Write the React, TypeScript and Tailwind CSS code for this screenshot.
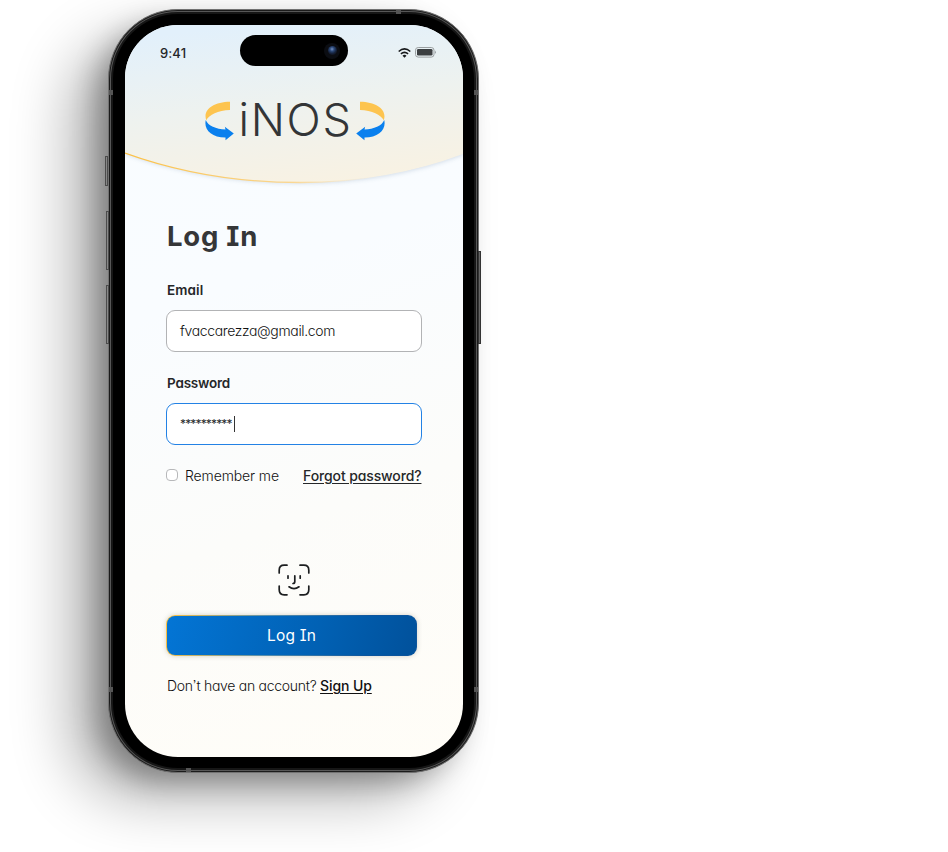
const inter = "font-['Inter','Liberation_Sans',sans-serif] [font-feature-settings:'cv11','cv08','ss03']";

function StatusBar() {
  return (
    <div className="flex h-[58px] items-start pt-[10px]">
      <span className="w-[115px] pt-[8px] pl-[35px] text-[13px] leading-5 font-medium tracking-[0.1px] text-[#242628]">9:41</span>
      <div className="flex h-[31px] w-[108px] items-center justify-end rounded-full bg-black pr-[8px]">
        <span className="flex h-4 w-4 items-center justify-center rounded-full bg-[#0b0d12]">
          <span className="h-[9px] w-[9px] rounded-full bg-[radial-gradient(circle_at_45%_35%,#7793c4_0,#2b4878_28%,#16233e_55%,#111521_75%)]" />
        </span>
      </div>
      <div className="flex w-[115px] items-center gap-[4px] pt-[12px] pl-[50px]">
        <svg width="13" height="10" viewBox="0 0 13 10" fill="none" stroke="#17191b" strokeWidth="1.6">
          <path d="M.7 3.5Q6.5-1.6 12.3 3.5M2.9 5.8Q6.5 2.8 10.1 5.8" />
          <path d="M4.5 7.7Q6.5 6 8.5 7.7L6.5 9.8Z" fill="#17191b" stroke="none" />
        </svg>
        <svg width="22" height="11" viewBox="0 0 22 11">
          <rect x=".5" y=".5" width="18.5" height="9.6" rx="2.7" fill="none" stroke="#9a9fa1" />
          <rect x="2" y="2" width="15.5" height="6.6" rx="1.3" fill="#3c3f41" />
          <path d="M20 3.5q1.8 1.8 0 3.5Z" fill="#858b8e" />
        </svg>
      </div>
    </div>
  );
}

function Swoosh({ flip = false }: { flip?: boolean }) {
  return (
    <svg width="29" height="40" viewBox="0 0 29 40" className={flip ? "-scale-x-100" : ""}>
      <path d="M25 .8V9C13 9.5 4 14 1.3 19.3C-2.5 9 8 1 25 .8Z" fill="#fdc44f" />
      <path d="M.8 19C3 25 11 28 20.500 28.500L19.800 25.800L28.8 32.6L20.5 39.2V36.5C6 36.5-1.5 28 .8 19Z" fill="#0a80ee" />
    </svg>
  );
}

function Logo() {
  return (
    <div className="flex justify-center pl-px">
      <Swoosh />
      <span className="h-[40px] w-[122px] pl-[5px] font-['Inter',sans-serif] text-[45px] leading-[38px] font-light tracking-[1.7px] whitespace-nowrap text-[#333537]">iNOS</span>
      <Swoosh flip />
    </div>
  );
}

function Header() {
  return (
    <header className="relative h-[164px]">
      <svg className="absolute inset-0" width="338" height="170" viewBox="0 0 338 170">
        <defs>
          <linearGradient id="sky" x1=".35" y1="0" x2=".6" y2="1">
            <stop stopColor="#e2f0fb" />
            <stop offset=".5" stopColor="#eef2ef" />
            <stop offset="1" stopColor="#f8f2e3" />
          </linearGradient>
          <linearGradient id="rim">
            <stop stopColor="#fcc144" />
            <stop offset=".5" stopColor="#fad793" />
            <stop offset=".75" stopColor="#faebce" stopOpacity="0" />
          </linearGradient>
        </defs>
        <path d="M0 0H338V129Q262 157.500 175 157.500Q82 157.500 0 128Z" fill="url(#sky)" className="drop-shadow-[0_1px_2px_rgba(20,60,110,0.16)]" />
        <path d="M0 128Q82 157.500 175 157.500Q262 157.500 338 129" fill="none" stroke="url(#rim)" strokeWidth="1.3" />
      </svg>
      <div className="relative">
        <StatusBar />
        <div className="pt-[18px]"><Logo /></div>
      </div>
    </header>
  );
}

function FaceId() {
  return (
    <svg width="32" height="32" viewBox="0 0 32 32" fill="none" stroke="#1c1e20" strokeWidth="1.7" strokeLinecap="round">
      <path d="M1.2 9V6.2Q1.2 1.2 6.2 1.2H9M22 1.2H25.8Q30.8 1.2 30.8 6.2V9M30.8 22V25.8Q30.8 30.8 25.8 30.8H22M9 30.8H6.2Q1.2 30.8 1.2 25.8V22" />
      <path d="M10 11.800V14.200M22.2 11.800V14.200M16.800 11.800V17.500Q16.8 19.5 15 19.5M11 22.800Q16 26.600 21 22.800" />
    </svg>
  );
}

export default function App() {
  return (
    <main className={`h-[852px] w-[948px] overflow-hidden bg-white pt-[9px] pl-[108px] ${inter}`}>
      <div className="relative h-[764px] w-[371px] rounded-[70px] border border-[#727272] bg-black p-[15px_15px_14px_16px] shadow-[inset_0_0_0_1px_#1b1b1b,inset_0_0_0_2px_#575757,inset_0_0_0_4px_#161616,-40px_28px_62px_-6px_rgba(0,0,0,0.33),-14px_12px_28px_-4px_rgba(0,0,0,0.3)]">
        <i className="absolute top-[146px] -left-[4px] h-[30px] w-[3px] border border-[#4b4b4b] bg-[#888]" />
        <i className="absolute top-[201px] -left-[3px] h-[59px] w-[3px] border border-[#4b4b4b] bg-[#888]" />
        <i className="absolute top-[275px] -left-[3px] h-[59px] w-[3px] border border-[#4b4b4b] bg-[#888]" />
        <i className="absolute top-[241px] -right-[3px] h-[93px] w-[3px] border border-[#333] bg-[#666]" />
        <i className="absolute top-[80px] left-0 h-[5px] w-[4px] bg-[#555]" />
        <i className="absolute top-[80px] right-0 h-[5px] w-[4px] bg-[#555]" />
        <i className="absolute top-[677px] left-0 h-[5px] w-[4px] bg-[#555]" />
        <i className="absolute top-[677px] right-0 h-[5px] w-[4px] bg-[#555]" />
        <i className="absolute top-0 left-[287px] h-[4px] w-[5px] bg-[#555]" />
        <i className="absolute bottom-0 left-[77px] h-[4px] w-[5px] bg-[#555]" />
        <div className="h-[732px] w-[338px] overflow-hidden rounded-[53px] bg-[linear-gradient(160deg,#f8fcff_0%,#f9fcff_35%,#fcfcfa_65%,#fffdf7_100%)]">
          <Header />
          <form className="pr-[41px] pl-[41px] text-[14px] text-[#252729]">
            <h1 className="pt-[27px] pl-px text-[27.5px] leading-[40px] font-bold tracking-[0.75px] text-[#353638]">Log In</h1>
            <div className="pt-[25px] pl-px text-[13.5px] leading-[18px] font-semibold tracking-[0.1px]">Email</div>
            <div className="mt-[11px] flex h-[42px] items-center rounded-[9px] border border-[#b2b3b5] bg-white pb-px pl-[13px] font-light tracking-[-0.35px] text-[#111]">fvaccarezza@gmail.com</div>
            <div className="mt-[22px] pl-px text-[13.5px] leading-[18px] font-semibold tracking-[-0.2px]">Password</div>
            <div className="mt-[11px] flex h-[42px] items-center rounded-[9px] border border-[#2382e5] bg-white pl-[13px]">
              <span className="w-[54px] text-[12px] tracking-[-0.85px]">**********</span>
              <span className="h-4 w-px bg-[#333]" />
            </div>
            <div className="mt-[20px] flex h-[20px] items-center">
              <span className="h-3 w-3 rounded-[4px] border border-[#b7b8ba] bg-white" />
              <span className="ml-[7px] w-[118px] font-light tracking-[-0.12px] whitespace-nowrap text-[#111]">Remember me</span>
              <span className="font-medium tracking-[-0.12px] whitespace-nowrap underline decoration-1 underline-offset-2">Forgot password?</span>
            </div>
            <div className="mt-[79px] flex h-[32px] justify-center"><FaceId /></div>
            <div className="mt-[19px] w-[251px] rounded-[9px] bg-[linear-gradient(100deg,#ffc23f,#5b91ad_40%,#0c559d_80%)] p-px shadow-[0_0_5px_rgba(90,80,50,0.25)]">
              <div className="flex h-[39px] items-center justify-center rounded-[8px] bg-[linear-gradient(105deg,#0375d5,#0161b4_60%,#01519b)] pt-px text-[15.5px] tracking-[0.2px] text-white">Log In</div>
            </div>
            <div className="mt-[20px] pl-px leading-[20px] font-light tracking-[-0.28px] whitespace-nowrap text-[#111]">Don’t have an account? <span className="font-medium tracking-[-0.1px] underline decoration-1 underline-offset-2">Sign Up</span></div>
          </form>
        </div>
      </div>
    </main>
  );
}
